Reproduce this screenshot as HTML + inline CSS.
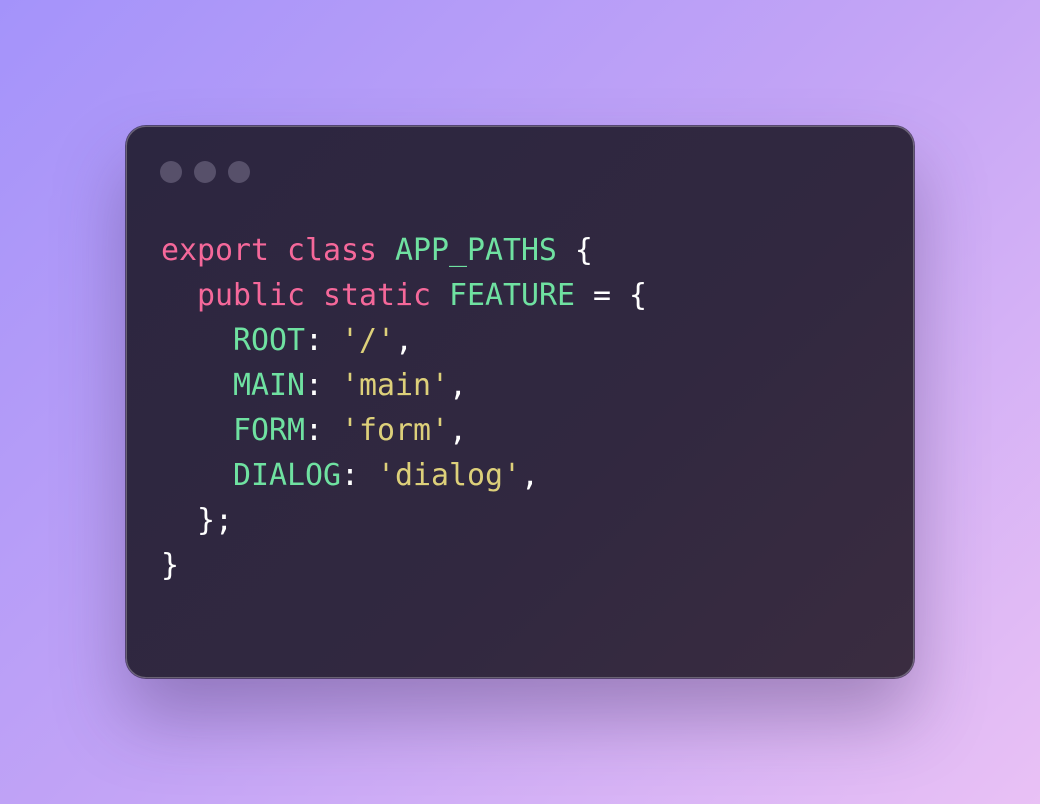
<!DOCTYPE html>
<html><head><meta charset="utf-8"><style>
html,body{margin:0;padding:0;width:1040px;height:804px;overflow:hidden}
body{background:linear-gradient(135deg,#a493fa 0%,#c3a4f6 50%,#e9c1f5 100%);position:relative;font-family:"DejaVu Sans Mono",monospace}
.card{position:absolute;left:126px;top:126px;width:786px;height:550px;border-radius:20px;border:1px solid #6a6374;
background:linear-gradient(135deg,#2c2640 0%,#312840 60%,#3a2c40 100%);
box-shadow:0 40px 70px rgba(60,40,90,0.35),0 0 0 1px rgba(20,15,30,0.6)}
.dot{position:absolute;top:34px;width:22px;height:22px;border-radius:50%;background:#57506a}
pre{position:absolute;left:34px;top:101px;margin:0;font-family:"DejaVu Sans Mono",monospace;font-size:29.9px;line-height:45px;color:#fff}
.k{color:#f5689a}.g{color:#6fe1a1}.y{color:#ddd07a}
</style></head><body>
<div class="card">
<div class="dot" style="left:33px"></div><div class="dot" style="left:67px"></div><div class="dot" style="left:101px"></div>
<pre><span class="k">export</span> <span class="k">class</span> <span class="g">APP_PATHS</span> {
  <span class="k">public</span> <span class="k">static</span> <span class="g">FEATURE</span> = {
    <span class="g">ROOT</span>: <span class="y">'/'</span>,
    <span class="g">MAIN</span>: <span class="y">'main'</span>,
    <span class="g">FORM</span>: <span class="y">'form'</span>,
    <span class="g">DIALOG</span>: <span class="y">'dialog'</span>,
  };
}</pre>
</div>
</body></html>
